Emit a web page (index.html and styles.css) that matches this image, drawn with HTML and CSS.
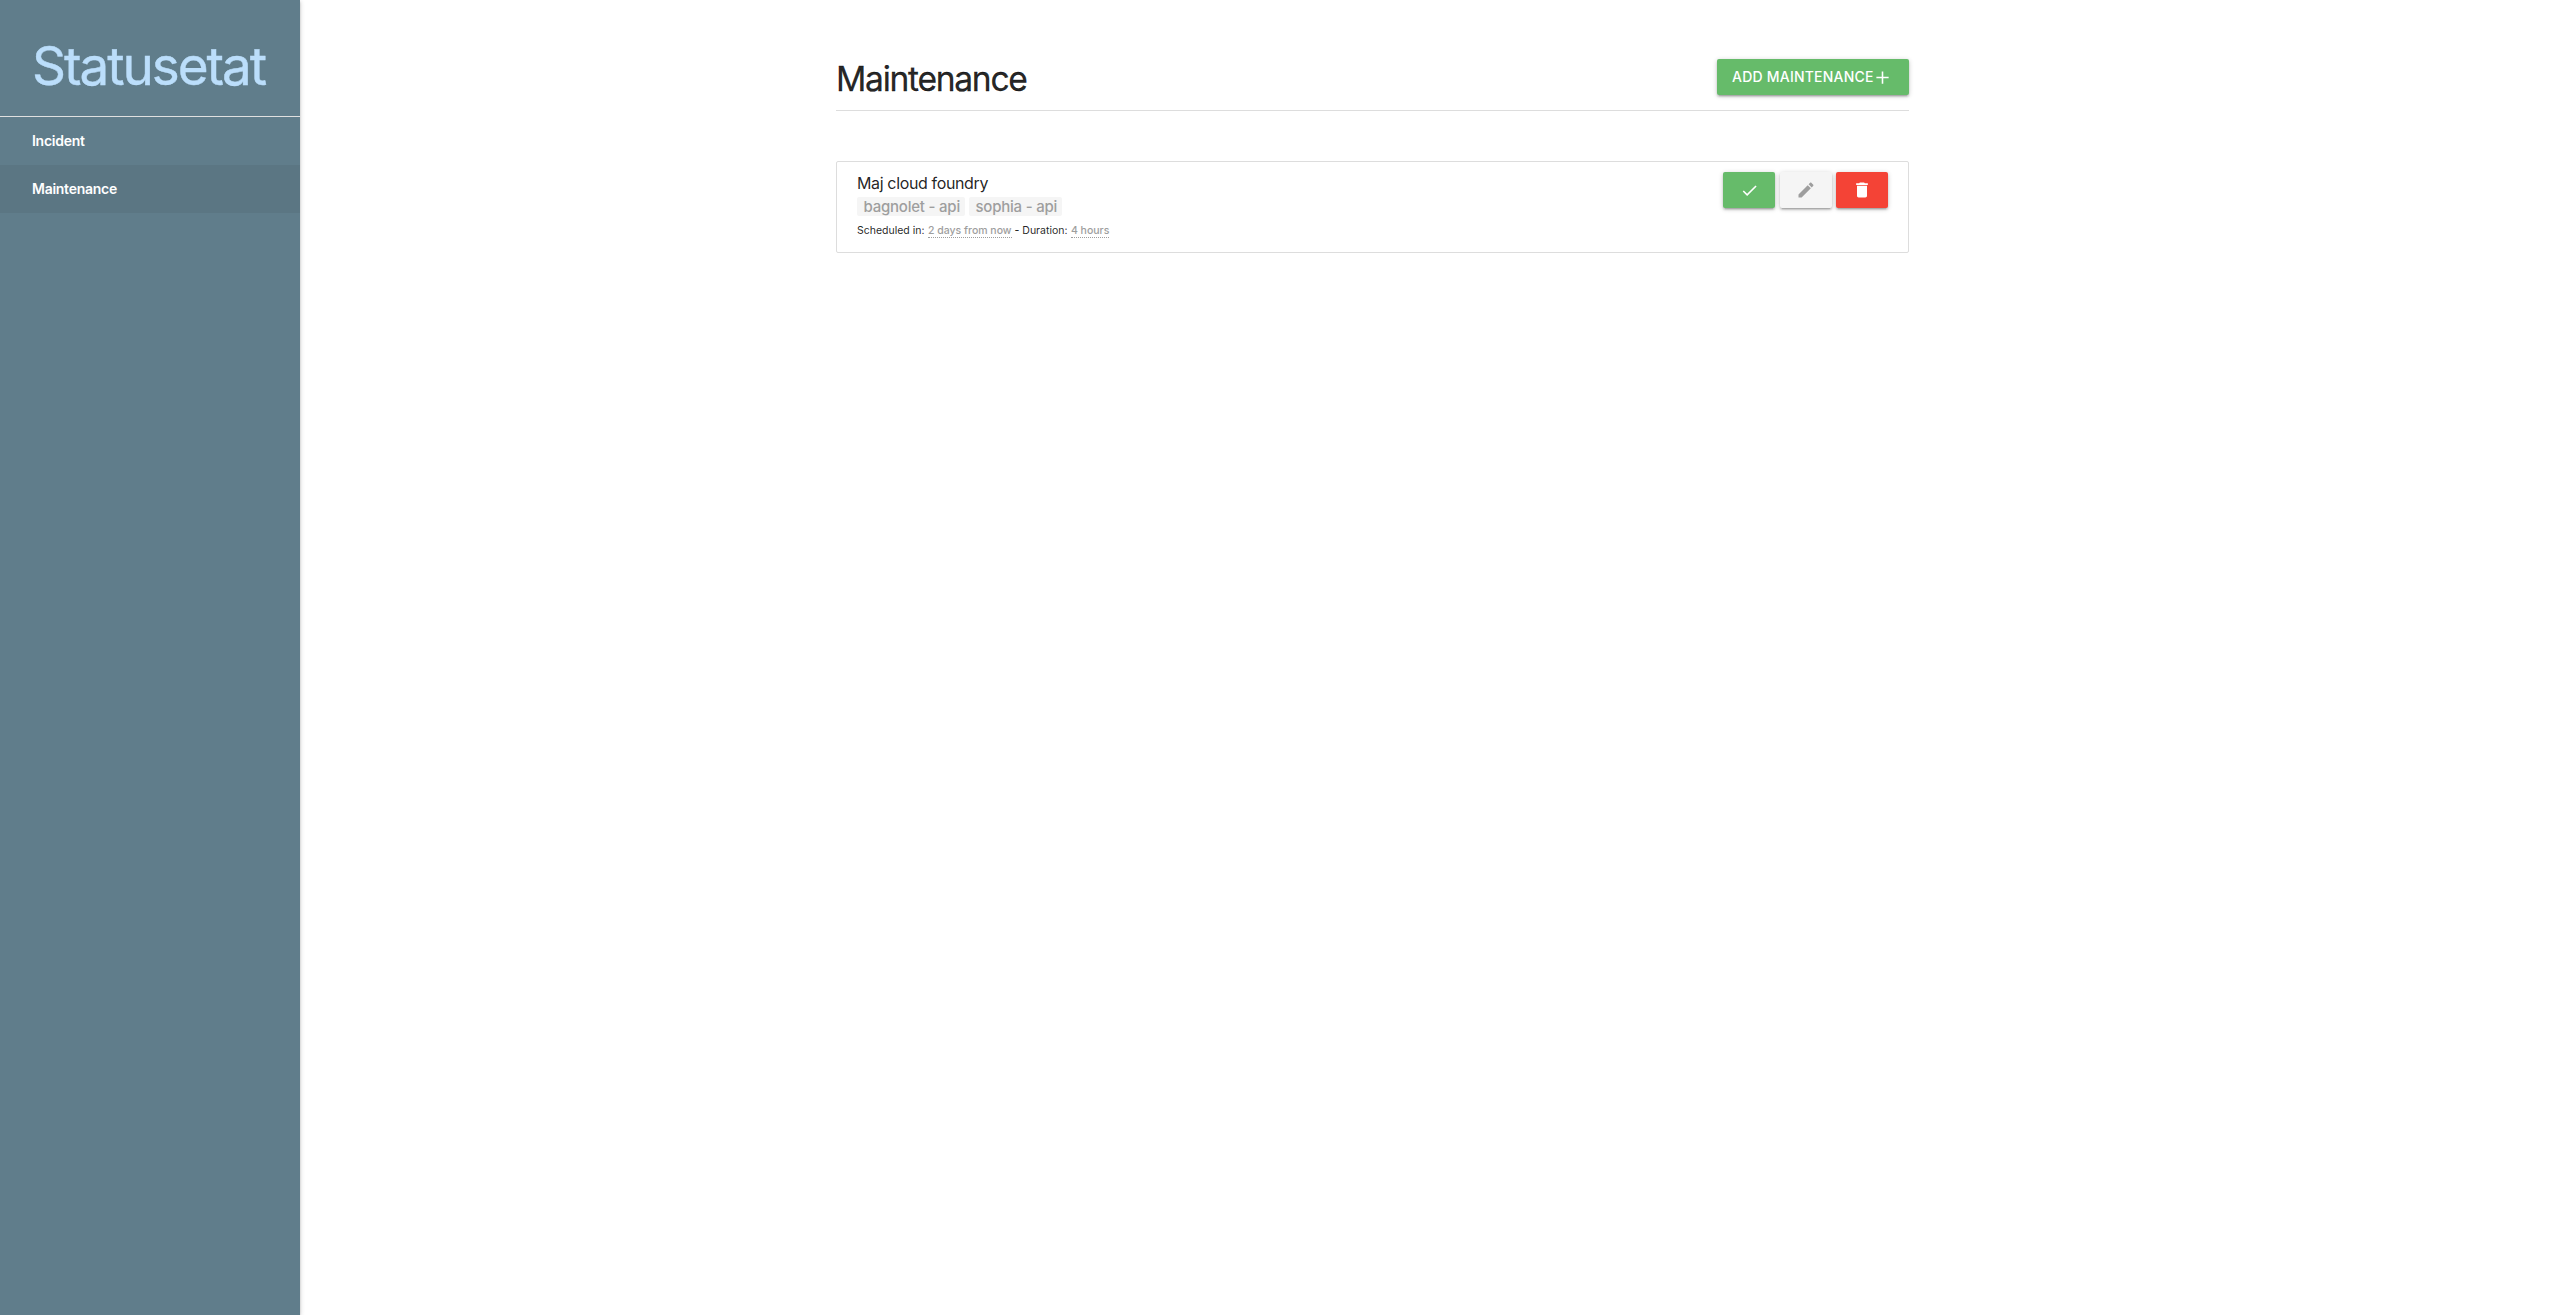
FILE: index.html
```html
<!DOCTYPE html>
<html lang="en">
<head>
<meta charset="utf-8">
<title>Statusetat</title>
<link rel="stylesheet" href="styles.css">
</head>
<body>
<nav class="sidenav">
  <a class="brand" href="#"><span>Statusetat</span></a>
  <a class="nav-link" href="#"><span>Incident</span></a>
  <a class="nav-link active" href="#"><span>Maintenance</span></a>
</nav>
<main class="container">
  <header class="page-header">
    <h1><span>Maintenance</span></h1>
    <button class="btn add"><span>ADD MAINTENANCE</span><svg viewBox="0 0 24 24" width="21" height="21"><path d="M19 12.9h-6.1v6.1h-1.8v-6.1H5v-1.8h6.1V5h1.8v6.1H19z"/></svg></button>
  </header>
  <section class="card">
    <div class="details">
      <div class="name"><span>Maj cloud foundry</span></div>
      <div class="tags"><span class="tag tag-bagnolet"><span>bagnolet - api</span></span><span class="tag tag-sophia"><span>sophia - api</span></span></div>
      <div class="schedule"><span>Scheduled in:</span> <abbr>2 days from now</abbr> <span class="dash">-</span> <span>Duration:</span> <abbr>4 hours</abbr></div>
    </div>
    <div class="actions">
      <button class="btn" aria-label="Finish"><svg viewBox="0 0 24 24" width="19" height="19"><path d="M9 16.17L4.83 12l-1.42 1.41L9 19 21 7l-1.41-1.41z"/></svg></button>
      <button class="btn edit" aria-label="Edit"><svg viewBox="0 0 24 24" width="20" height="20"><path d="M3 17.25V21h3.75L17.81 9.94l-3.75-3.75L3 17.25zM20.71 7.04c.39-.39.39-1.02 0-1.41l-2.34-2.34c-.39-.39-1.02-.39-1.41 0l-1.83 1.83 3.75 3.75 1.83-1.83z"/></svg></button>
      <button class="btn delete" aria-label="Delete"><svg viewBox="0 0 24 24" width="20" height="20"><path d="M6 19c0 1.1.9 2 2 2h8c1.1 0 2-.9 2-2V7H6v12zM19 4h-3.5l-1-1h-5l-1 1H5v2h14V4z"/></svg></button>
    </div>
  </section>
</main>
</body>
</html>
```
FILE: styles.css
```css
* { box-sizing: border-box; }
body {
  margin: 0;
  min-height: 100vh;
  display: flex;
  font-family: Inter, "Liberation Sans", sans-serif;
  color: rgba(0, 0, 0, 0.87);
  background: #fff;
}
a { color: inherit; text-decoration: none; }
.sidenav {
  width: 300px;
  flex: none;
  background: #607d8b;
  box-shadow: 0 2px 2px 0 rgba(0,0,0,.14), 0 3px 1px -2px rgba(0,0,0,.12), 0 1px 5px 0 rgba(0,0,0,.2);
}
.brand {
  display: block;
  height: 117px;
  padding: 33px 0 0 32px;
  border-bottom: 1px solid #e0e0e0;
  color: #bbdefb;
  font-size: 53px;
  line-height: 66px;
  letter-spacing: -2.05px;
  -webkit-text-stroke: .4px #bbdefb;
}
.nav-link {
  display: block;
  height: 48px;
  padding-left: 32px;
  line-height: 48px;
  font-size: 14px;
  font-weight: 600;
  letter-spacing: -.27px;
  color: #fff;
}
.active { background: rgba(0, 0, 0, 0.05); }
.container { width: 1073px; margin-left: 536px; padding-top: 59px; }
.page-header {
  display: flex;
  justify-content: space-between;
  align-items: flex-start;
  height: 52px;
  border-bottom: 1px solid #ddd;
}
h1 { margin: 0; font-size: 33.6px; line-height: 40px; font-weight: 400; letter-spacing: -1.28px; -webkit-text-stroke: .3px currentColor; }
.btn {
  display: flex;
  align-items: center;
  justify-content: center;
  width: 52px;
  height: 36px;
  padding: 0;
  border: 0;
  border-radius: 2px;
  background: #66bb6a;
  color: #fff;
  font: 500 14px/36px Inter, "Liberation Sans", sans-serif;
  box-shadow: 0 2px 2px 0 rgba(0,0,0,.14), 0 3px 1px -2px rgba(0,0,0,.12), 0 1px 5px 0 rgba(0,0,0,.2);
}
.btn svg { fill: currentColor; }
.add { width: 192px; justify-content: flex-start; padding-left: 15px; letter-spacing: .22px; }
.add svg { margin-left: -2px; }
.edit { background: #f5f5f5; color: #9e9e9e; }
.delete { background: #f44336; }
.card {
  display: flex;
  justify-content: space-between;
  height: 92px;
  margin-top: 50px;
  padding: 10px 20px;
  border: 1px solid #ddd;
  border-radius: 2px;
}
.name { font-size: 16px; line-height: 22px; height: 25px; letter-spacing: -.36px; }
.tags { display: flex; gap: 4px; height: 19px; }
.tag {
  padding-left: 6.5px;
  border-radius: 2px;
  background: #f5f5f5;
  color: #9e9e9e;
  font-size: 15px;
  font-weight: 500;
  line-height: 19px;
  letter-spacing: -.22px;
}
.tag-bagnolet { width: 108px; }
.tag-sophia { width: 93px; }
.schedule { margin-top: 5px; font-size: 10.5px; line-height: 20px; }
.schedule span + abbr { margin-left: .5px; }
.dash { font-weight: 500; }
abbr { color: #9e9e9e; font-weight: 500; border-bottom: 1px dotted #9e9e9e; }
.actions { display: flex; gap: 4.5px; height: 36px; }
```
